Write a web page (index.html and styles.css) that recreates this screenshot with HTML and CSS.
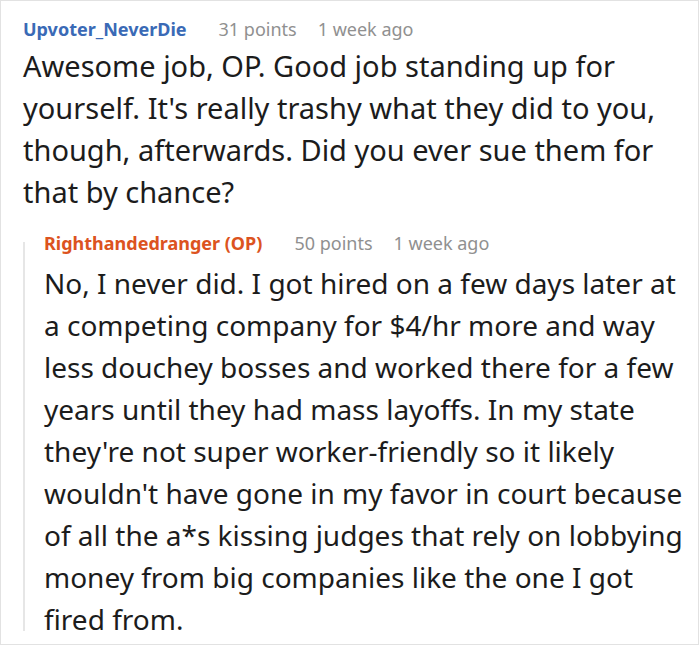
FILE: index.html
```html
<!DOCTYPE html>
<html>
<head>
<meta charset="utf-8">
<link rel="stylesheet" href="styles.css">
</head>
<body>
<div class="thread">
  <div class="comment">
    <div class="meta">
      <span class="author">Upvoter_NeverDie</span>
      <span class="info points">31 points</span>
      <span class="info">1 week ago</span>
    </div>
    <p class="text">Awesome job, OP. Good job standing up for yourself. It's really trashy what they did to you, though, afterwards. Did you ever sue them for that by chance?</p>
    <div class="reply">
      <div class="meta">
        <span class="author op">Righthandedranger (OP)</span>
        <span class="info points">50 points</span>
        <span class="info">1 week ago</span>
      </div>
      <p class="text">No, I never did. I got hired on a few days later at a competing company for $4/hr more and way less douchey bosses and worked there for a few years until they had mass layoffs. In my state they're not super worker-friendly so it likely wouldn't have gone in my favor in court because of all the a*s kissing judges that rely on lobbying money from big companies like the one I got fired from.</p>
    </div>
  </div>
</div>
</body>
</html>
```
FILE: styles.css
```css
html, body {
  margin: 0;
  padding: 0;
  background: #fff;
}
.thread {
  width: 699px;
  height: 645px;
  box-sizing: border-box;
  border: 1px solid #e2e2e2;
  font-family: "Noto Sans", "Open Sans", sans-serif;
  color: #1c1c1c;
  overflow: hidden;
}
.comment {
  padding: 16px 0 0 22px;
}
.meta {
  display: flex;
  font-size: 18px;
  line-height: 24px;
}
.author {
  font-weight: 700;
  color: #3a6ab6;
}
.author.op {
  color: #dc5320;
}
.info {
  color: #909090;
}
.points {
  margin: 0 21px 0 32px;
}
.text {
  margin: 4px 0 0;
  font-size: 29px;
  line-height: 42px;
}
.reply {
  position: relative;
  margin-top: 18px;
  padding-left: 21px;
}
.reply::before {
  content: "";
  position: absolute;
  left: 0;
  top: 11px;
  bottom: 9px;
  width: 2px;
  background: #e6e6e6;
}
.reply .text {
  margin-top: 7px;
  font-size: 28px;
}
```
